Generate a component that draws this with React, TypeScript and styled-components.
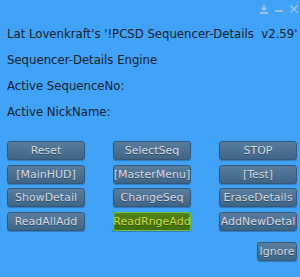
import React from "react";
import styled, { createGlobalStyle } from "styled-components";

const GlobalStyle = createGlobalStyle`
  html, body {
    margin: 0;
    padding: 0;
    background: #41a3f7;
  }
  body {
    font-family: "DejaVu Sans", "Liberation Sans", sans-serif;
  }
`;

const Panel = styled.div`
  width: 300px;
  height: 277px;
  background: #41a3f7;
  position: relative;
  overflow: hidden;
  box-sizing: border-box;
  padding: 26px 3px 0 7px;
`;

const TitleIcons = styled.div`
  position: absolute;
  top: 3px;
  right: 1px;
  display: flex;
  gap: 5px;
  align-items: center;
`;

const InfoList = styled.div`
  display: flex;
  flex-direction: column;
  gap: 10px;
`;

const InfoLine = styled.div`
  color: #16202c;
  font-size: 11.7px;
  line-height: 16px;
  white-space: pre;
`;

const ButtonGrid = styled.div`
  display: grid;
  grid-template-columns: 78px 78px 78px;
  column-gap: 28px;
  row-gap: 4.7px;
  margin-top: 21px;
`;

const Button = styled.div<{ $active?: boolean }>`
  height: 19px;
  box-sizing: border-box;
  border-radius: 3px;
  display: flex;
  align-items: center;
  justify-content: center;
  font-size: 11px;
  white-space: nowrap;
  color: ${(p) => (p.$active ? "#d2dc44" : "#d6dbe1")};
  text-shadow: 0 1px 0 rgba(0, 0, 0, 0.35);
  background: ${(p) =>
    p.$active
      ? "linear-gradient(#53841a, #426e0c)"
      : "linear-gradient(#587d9f, #3f6587)"};
  border: 1px solid ${(p) => (p.$active ? "#6cc63a" : "#35577a")};
  box-shadow: 0 1px 1px rgba(0, 0, 0, 0.25);
`;

const Footer = styled.div`
  display: flex;
  justify-content: flex-end;
  margin-top: 11px;
`;

const IgnoreButton = styled(Button)`
  width: 40px;
`;

const buttons = [
  "Reset",
  "SelectSeq",
  "STOP",
  "[MainHUD]",
  "[MasterMenu]",
  "[Test]",
  "ShowDetail",
  "ChangeSeq",
  "EraseDetails",
  "ReadAllAdd",
  "ReadRngeAdd",
  "AddNewDetal",
];

const App = () => {
  return (
    <>
      <GlobalStyle />
      <Panel>
        <TitleIcons>
          <svg width="10" height="12" viewBox="0 0 10 12">
            <path d="M5 1v6M2.5 4.5L5 7l2.5-2.5" stroke="#9ec3e2" strokeWidth="1.6" fill="none" />
            <rect x="1" y="9" width="8" height="2" fill="#9ec3e2" />
          </svg>
          <svg width="10" height="12" viewBox="0 0 10 12">
            <rect x="1" y="7" width="8" height="2" fill="#9ec3e2" />
          </svg>
          <svg width="10" height="12" viewBox="0 0 10 12">
            <path d="M1.5 2.5l7 7M8.5 2.5l-7 7" stroke="#9ec3e2" strokeWidth="1.6" />
          </svg>
        </TitleIcons>
        <InfoList>
          <InfoLine>Lat Lovenkraft's '!PCSD Sequencer-Details  v2.59'</InfoLine>
          <InfoLine>Sequencer-Details Engine</InfoLine>
          <InfoLine>Active SequenceNo:</InfoLine>
          <InfoLine>Active NickName:</InfoLine>
        </InfoList>
        <ButtonGrid>
          {buttons.map((b) => (
            <Button key={b} $active={b === "ReadRngeAdd"}>
              {b}
            </Button>
          ))}
        </ButtonGrid>
        <Footer>
          <IgnoreButton>Ignore</IgnoreButton>
        </Footer>
      </Panel>
    </>
  );
};

export default App;
